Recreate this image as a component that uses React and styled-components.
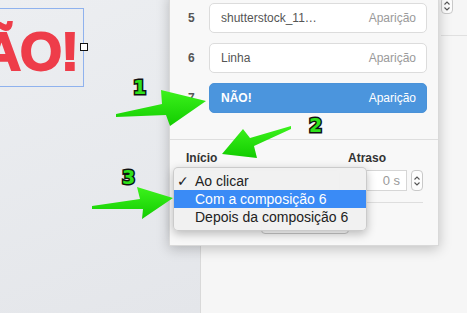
import React from "react";
import styled, { createGlobalStyle } from "styled-components";

const GlobalStyle = createGlobalStyle`
  html, body {
    margin: 0;
    padding: 0;
    background: #f6f6f6;
  }
  body {
    font-family: "Liberation Sans", Arial, sans-serif;
  }
`;

const rows = [
  { n: 5, name: "shutterstock_11…", effect: "Aparição" },
  { n: 6, name: "Linha", effect: "Aparição" },
  { n: 7, name: "NÃO!", effect: "Aparição", active: true },
];

const options = [
  { label: "Ao clicar", checked: true },
  { label: "Com a composição 6", hover: true },
  { label: "Depois da composição 6" },
];

const Stepper = ({ height = 21 }) => (
  <StepBox $h={height}>
    <svg width="8" height="12" viewBox="0 0 8 12">
      <path d="M1.5 4.5 L4 2 L6.5 4.5" fill="none" stroke="#555" strokeWidth="1.1" />
      <path d="M1.5 7.5 L4 10 L6.5 7.5" fill="none" stroke="#555" strokeWidth="1.1" />
    </svg>
  </StepBox>
);

const App = () => {
  return (
    <>
      <GlobalStyle />
      <Screen>
        <Canvas>
          <Selection>
            <SlideText>NÃO!</SlideText>
            <Handle />
          </Selection>
        </Canvas>
        <Inspector>
          <InspectorHeader>
            <TopStep>
              <Stepper height={17} />
            </TopStep>
          </InspectorHeader>
        </Inspector>

        <Popover>
          <BuildList>
            {rows.map((r) => (
              <BuildRow key={r.n}>
                <Num>{r.n}</Num>
                <Field $active={r.active}>
                  <Name $active={r.active}>{r.name}</Name>
                  <Effect $active={r.active}>{r.effect}</Effect>
                </Field>
              </BuildRow>
            ))}
          </BuildList>

          <Timing>
            <Labels>
              <Label>Início</Label>
              <Label>Atraso</Label>
            </Labels>
            <Controls>
              <SelectBox />
              <DelayGroup>
                <DelayInput>0 s</DelayInput>
                <Stepper />
              </DelayGroup>
            </Controls>
            <Divider />
            <PreviewButton />

            <Menu>
              {options.map((o) => (
                <MenuItem key={o.label} $hover={o.hover}>
                  {o.checked && <Check>✓</Check>}
                  {o.label}
                </MenuItem>
              ))}
            </Menu>
          </Timing>
        </Popover>

        <Arrows width="467" height="313" viewBox="0 0 467 313">
          <defs>
            <linearGradient id="g" x1="0" y1="0" x2="0" y2="1">
              <stop offset="0" stopColor="#3cf21c" />
              <stop offset="1" stopColor="#12cc00" />
            </linearGradient>
          </defs>
          <polygon
            points="116,114 162,104 161,90 206,101 170,126 166,115 116,117"
            fill="url(#g)"
          />
          <polygon
            points="291,126 250,138 243,129 222,154 257,158 254,146 291,129"
            fill="url(#g)"
          />
          <polygon
            points="92,206 140,199 137,187 173,198 142,219 143,209 92,209"
            fill="url(#g)"
          />
        </Arrows>
        <Badge $x={133} $y={77}>1</Badge>
        <Badge $x={309} $y={115}>2</Badge>
        <Badge $x={122} $y={167}>3</Badge>
      </Screen>
    </>
  );
};

export default App;

const Screen = styled.div`
  position: relative;
  display: flex;
  width: 467px;
  height: 313px;
  overflow: hidden;
`;

const Canvas = styled.div`
  position: relative;
  width: 200px;
  flex-shrink: 0;
  background: linear-gradient(160deg, #eceef1 0%, #e4e6ea 100%);
`;

const Selection = styled.div`
  position: absolute;
  left: -20px;
  top: 8px;
  width: 102px;
  height: 77px;
  border: 1px solid #8fb2ee;
  display: flex;
  align-items: center;
  justify-content: flex-end;
`;

const SlideText = styled.span`
  font-family: "Liberation Sans", Arial, sans-serif;
  font-weight: 700;
  font-size: 54px;
  line-height: 1;
  color: #ee3d4a;
  -webkit-text-stroke: 2px #ee3d4a;
  letter-spacing: -1px;
  margin-right: 5px;
  margin-top: 6px;
  white-space: nowrap;
`;

const Handle = styled.div`
  position: absolute;
  right: -5px;
  top: 34px;
  width: 6px;
  height: 6px;
  background: #fff;
  border: 1px solid #111;
`;

const Inspector = styled.div`
  flex: 1;
  background: #f6f6f6;
  border-left: 1px solid #d9d9d9;
`;

const InspectorHeader = styled.div`
  height: 35px;
  margin-left: 240px;
  border-bottom: 1px solid #e0e0e0;
  display: flex;
  justify-content: flex-end;
  padding-right: 14px;
`;

const TopStep = styled.div`
  margin-top: -3px;
`;

const StepBox = styled.div`
  width: 12px;
  height: ${(p) => p.$h}px;
  box-sizing: border-box;
  border: 1px solid #c9c9c9;
  border-radius: 4px;
  background: #fdfdfd;
  display: flex;
  align-items: center;
  justify-content: center;
`;

const Popover = styled.div`
  position: absolute;
  left: 169px;
  top: -7px;
  width: 270px;
  box-sizing: border-box;
  background: #f8f8f8;
  border: 1px solid rgba(0, 0, 0, 0.12);
  border-top: none;
  box-shadow: 0 3px 12px rgba(0, 0, 0, 0.22);
`;

const BuildList = styled.div`
  display: flex;
  flex-direction: column;
  gap: 10px;
  padding: 10px 11px 26px 17px;
  border-bottom: 1px solid #dedede;
`;

const BuildRow = styled.div`
  display: grid;
  grid-template-columns: 22px 1fr;
  align-items: center;
`;

const Num = styled.span`
  font-size: 12px;
  font-weight: 700;
  color: #555;
  padding-left: 1px;
`;

const Field = styled.div`
  height: 30px;
  box-sizing: border-box;
  border-radius: 5px;
  border: 1px solid ${(p) => (p.$active ? "#4a92d8" : "#dcdcdc")};
  background: ${(p) => (p.$active ? "#4b95dd" : "#ffffff")};
  display: flex;
  align-items: center;
  justify-content: space-between;
  padding: 0 10px 0 11px;
  font-size: 12px;
`;

const Name = styled.span`
  color: ${(p) => (p.$active ? "#ffffff" : "#555")};
  font-weight: ${(p) => (p.$active ? 700 : 400)};
`;

const Effect = styled.span`
  color: ${(p) => (p.$active ? "#ffffff" : "#9a9a9a")};
`;

const Timing = styled.div`
  position: relative;
  padding: 11px 15px 11px 16px;
`;

const Labels = styled.div`
  display: grid;
  grid-template-columns: 1fr 75px;
`;

const Label = styled.span`
  font-size: 12px;
  font-weight: 700;
  line-height: 14px;
  color: #333;
`;

const Controls = styled.div`
  display: grid;
  grid-template-columns: 1fr 75px;
  margin-top: 5px;
  column-gap: 8px;
`;

const SelectBox = styled.div`
  height: 21px;
  border: 1px solid #ccc;
  border-radius: 4px;
  background: #fff;
`;

const DelayGroup = styled.div`
  display: flex;
  gap: 4px;
  justify-content: flex-end;
`;

const DelayInput = styled.div`
  width: 59px;
  height: 21px;
  box-sizing: border-box;
  border: 1px solid #d6d6d6;
  background: #fff;
  font-size: 13px;
  color: #9a9a9a;
  text-align: right;
  line-height: 19px;
  padding-right: 6px;
`;

const Divider = styled.div`
  margin-top: 9px;
  border-top: 1px solid #dedede;
`;

const PreviewButton = styled.div`
  width: 88px;
  height: 20px;
  margin: 11px auto 0;
  box-sizing: border-box;
  border: 1px solid #c6c6c6;
  border-radius: 4px;
  background: #fff;
`;

const Menu = styled.div`
  position: absolute;
  left: 3px;
  top: 27px;
  width: 194px;
  box-sizing: border-box;
  padding: 4px 0;
  background: rgba(241, 241, 241, 0.98);
  border: 1px solid rgba(0, 0, 0, 0.16);
  border-radius: 5px;
  box-shadow: 0 3px 10px rgba(0, 0, 0, 0.25);
`;

const MenuItem = styled.div`
  position: relative;
  height: 18px;
  line-height: 18px;
  padding-left: 21px;
  font-size: 14px;
  color: ${(p) => (p.$hover ? "#ffffff" : "#222")};
  background: ${(p) => (p.$hover ? "#3a8bf6" : "transparent")};
  white-space: nowrap;
`;

const Check = styled.span`
  position: absolute;
  left: 3px;
  top: 0;
  font-family: "DejaVu Sans", sans-serif;
  font-size: 14px;
  font-weight: 700;
`;

const Arrows = styled.svg`
  position: absolute;
  left: 0;
  top: 0;
  pointer-events: none;
`;

const Badge = styled.span`
  position: absolute;
  left: ${(p) => p.$x}px;
  top: ${(p) => p.$y}px;
  font-family: "DejaVu Sans", sans-serif;
  font-weight: 700;
  font-size: 19px;
  line-height: 20px;
  color: #2ee21a;
  -webkit-text-stroke: 3px #111;
  paint-order: stroke fill;
`;
